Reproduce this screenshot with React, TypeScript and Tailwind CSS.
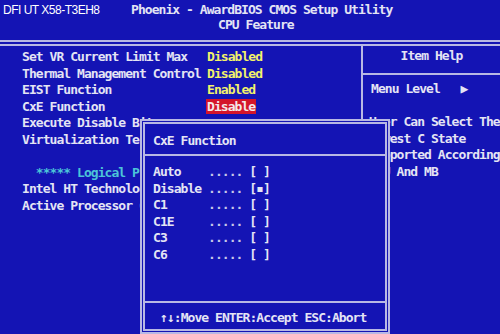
import React from "react";

const mono = "font-['DejaVu_Sans_Mono','Liberation_Mono',monospace] font-bold text-[13px] tracking-[-0.95px] leading-[16.5px] whitespace-pre";

const rows: { label: string; value: string; hl?: boolean }[] = [
  { label: "Set VR Current Limit Max", value: "Disabled" },
  { label: "Thermal Management Control", value: "Disabled" },
  { label: "EIST Function", value: "Enabled" },
  { label: "CxE Function", value: "Disable", hl: true },
  { label: "Execute Disable Bit", value: "" },
  { label: "Virtualization Technology", value: "" },
];

const options = ["Auto", "Disable", "C1", "C1E", "C3", "C6"];

export default function App() {
  return (
    <div className="relative w-[500px] h-[334px] overflow-hidden bg-[#1414b4] text-[#e4e4f4]">
      {/* header */}
      <div className="h-[40px] pt-[2px]">
        <div className={`${mono} ml-[131px]`}>Phoenix - AwardBIOS CMOS Setup Utility</div>
        <div className={`${mono} ml-[218px] -mt-[2px]`}>CPU Feature</div>
      </div>
      <div className="h-[6px] border-t-2 border-b-2 border-[#b8b8e4]" />
      <div className="flex h-[288px]">
        {/* left column */}
        <div className={`${mono} w-[361px] shrink-0 pt-[3px] pl-[22px]`}>
          {rows.map((r) => (
            <div key={r.label} className="flex">
              <div className="w-[185px] shrink-0">{r.label}</div>
              <div className="text-[#f2f26a]">
                {r.hl ? (
                  <span className="bg-[#d4152a] text-[#f4e8e8] -ml-[1px] px-[1px]">{r.value}</span>
                ) : (
                  r.value
                )}
              </div>
            </div>
          ))}
          <div> </div>
          <div className="text-[#4cc4d8]">{"  ***** Logical Processor *****"}</div>
          <div>Intel HT Technology</div>
          <div>Active Processor Cores</div>
        </div>
        {/* right column */}
        <div className="flex-1 border-l-2 border-[#b8b8e4]">
          <div className={`${mono} h-[29px] pt-[2px] text-center border-b-2 border-[#b8b8e4]`}>Item Help</div>
          <div className={`${mono} pt-[6px]`}>
            <div className="pl-[8px]">{"Menu Level   \u25B6"}</div>
            <div> </div>
            <div className="pl-[6px]">User Can Select The</div>
            <div className="pl-[6px]">Lowest C State</div>
            <div className="pl-[6px]">Supported According</div>
            <div className="pl-[6px]">CPU And MB</div>
          </div>
        </div>
      </div>

      {/* popup */}
      <div className="absolute left-[140px] top-[119px] w-[250px] h-[215px] bg-[#1414b4] border-2 border-[#b8b8e4] p-[1px]">
        <div className="h-full flex flex-col border-2 border-[#b8b8e4]">
          <div className={`${mono} pt-[9px] pl-[8px] h-[32px] border-b-2 border-[#b8b8e4]`}>CxE Function</div>
          <div className={`${mono} pl-[8px] pt-[8px] flex-1`}>
            {options.map((o) => (
              <div key={o}>
                {o.padEnd(8, " ")}
                <span className="text-[#c8c8e8]">.....</span>
                {o === "Disable" ? " [\u25AA]" : " [ ]"}
              </div>
            ))}
          </div>
          <div className={`${mono} h-[28px] pt-[7px] pl-[15px] border-t-2 border-[#b8b8e4]`}>
            {"\u2191\u2193:Move ENTER:Accept ESC:Abort"}
          </div>
        </div>
      </div>

      {/* watermark */}
      <div className="absolute left-[3px] top-[2px] font-['Liberation_Sans',Arial,sans-serif] text-[12px] tracking-[-0.5px] leading-[16px] text-white">
        DFI UT X58-T3EH8
      </div>
    </div>
  );
}
